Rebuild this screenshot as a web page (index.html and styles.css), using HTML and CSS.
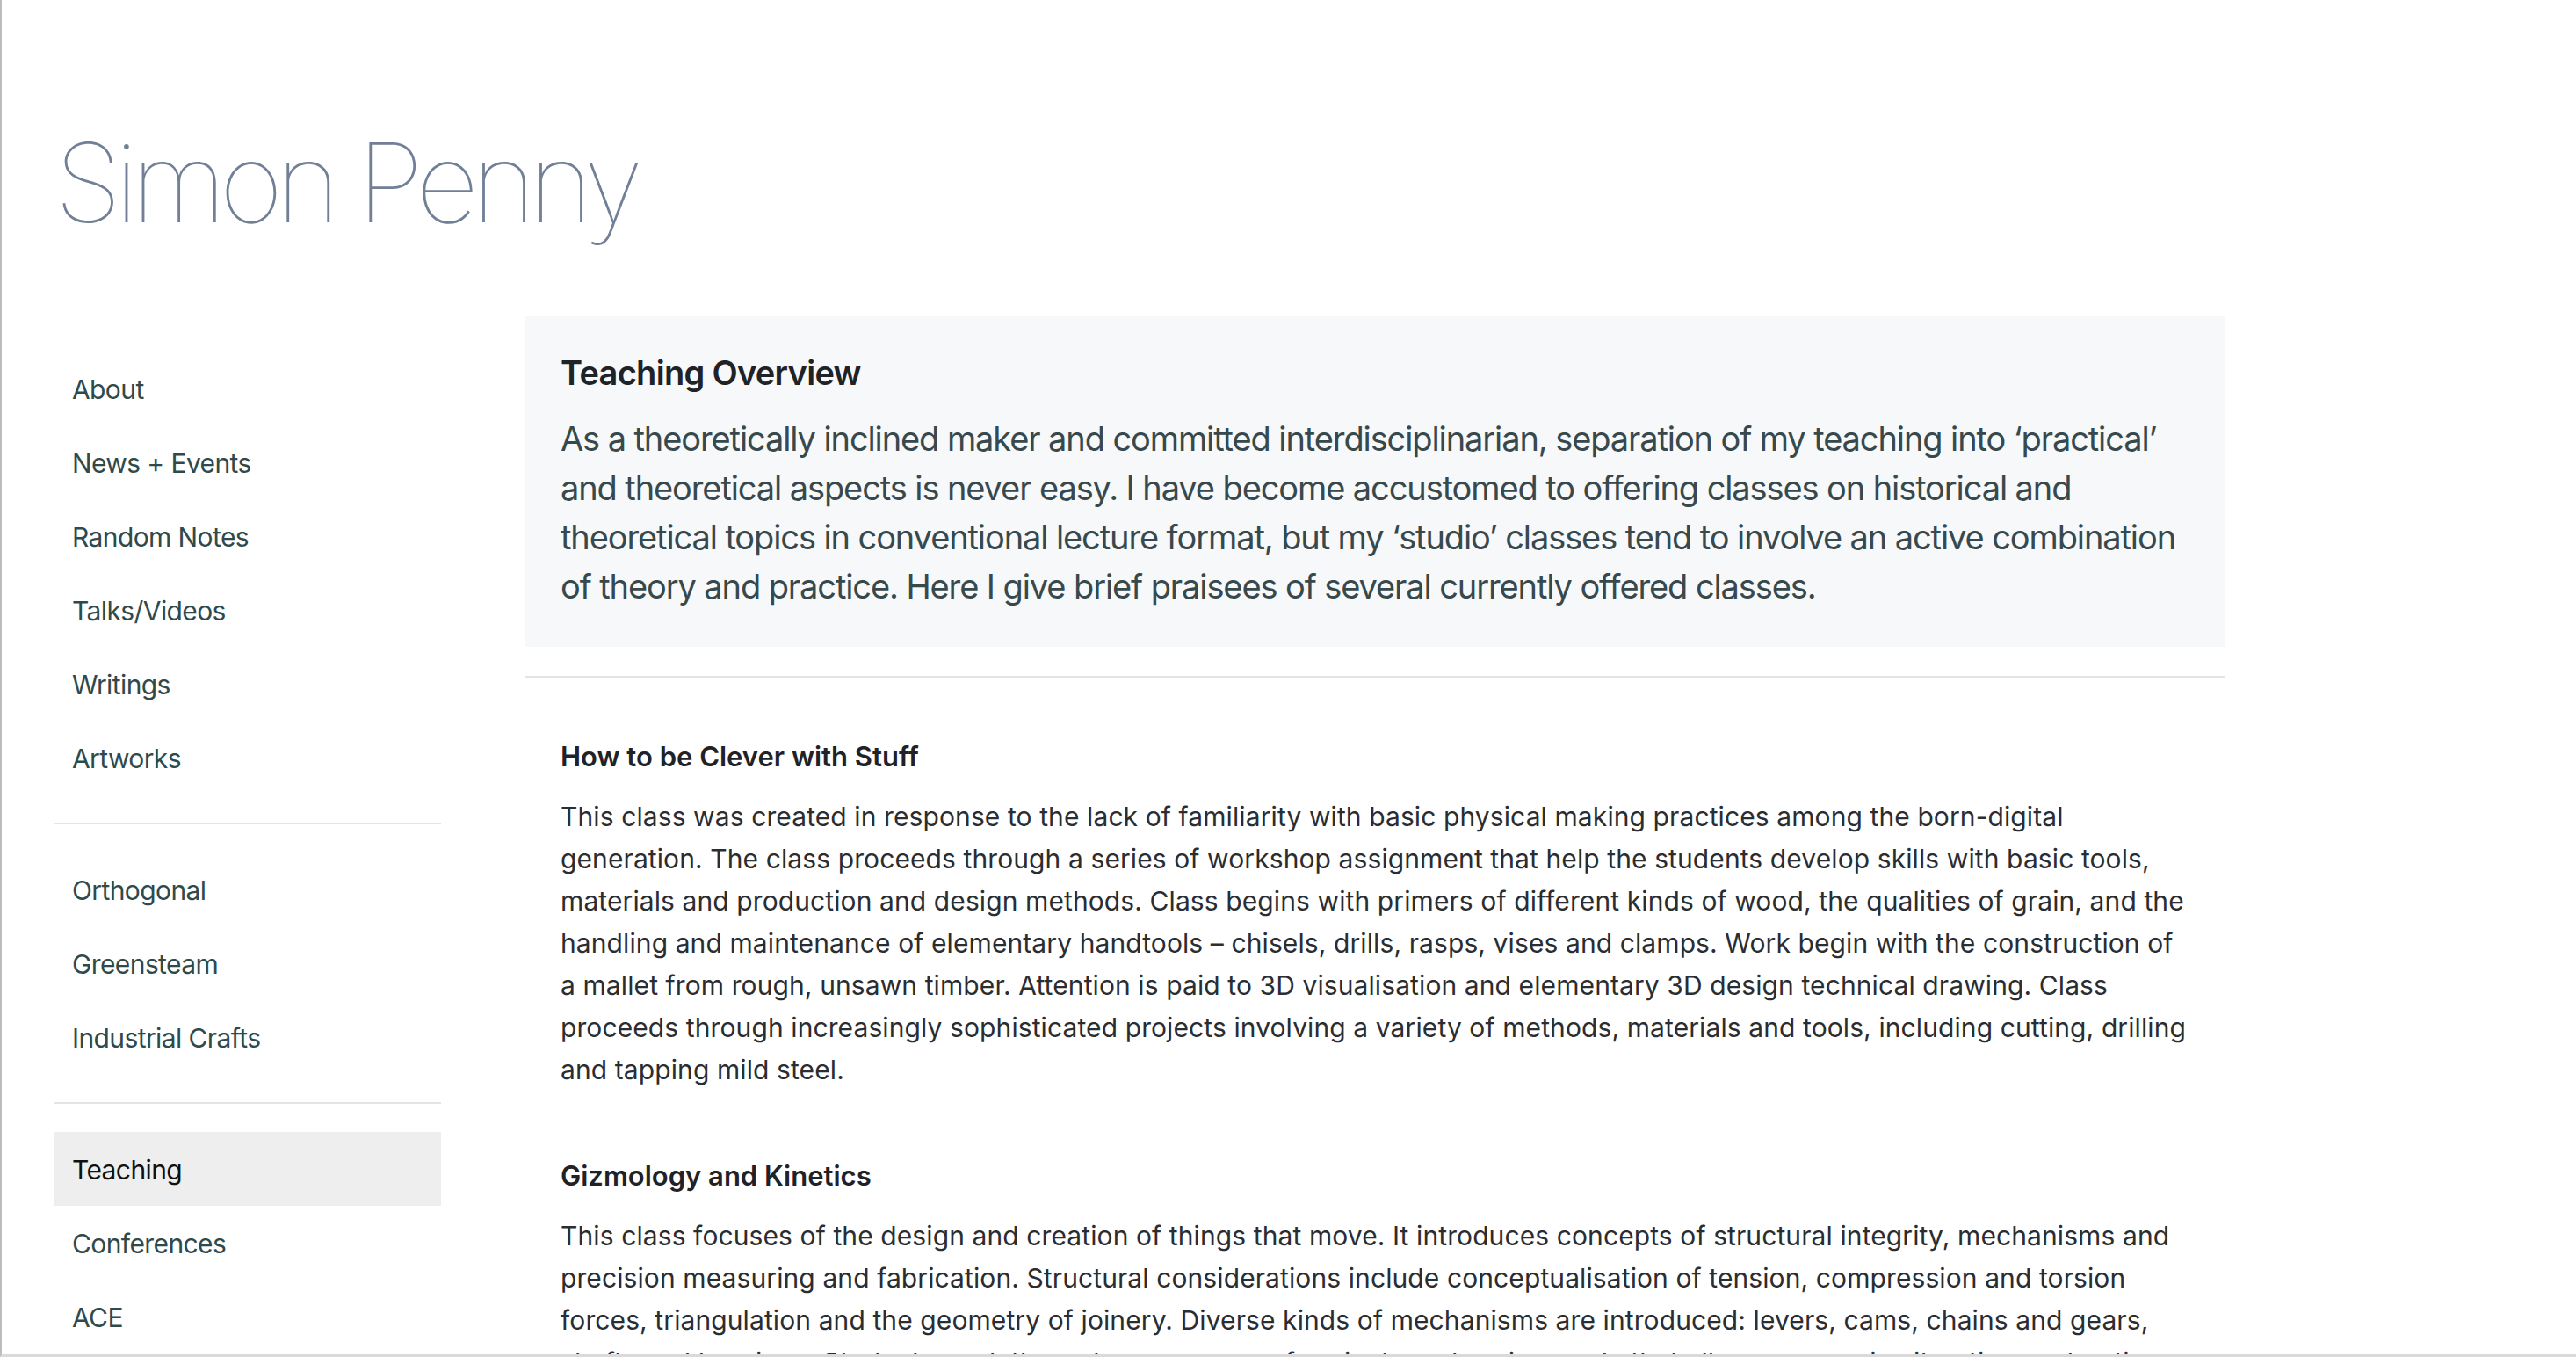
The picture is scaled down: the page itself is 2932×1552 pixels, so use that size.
FILE: index.html
```html
<!DOCTYPE html>
<html lang="en">
<head>
<meta charset="utf-8">
<title>Simon Penny – Teaching</title>
<link rel="stylesheet" href="styles.css">
</head>
<body>
<div class="window">
  <div class="page">
    <header class="site-header">
      <h1 class="site-title">Simon Penny</h1>
    </header>
    <div class="layout">
      <nav class="sidebar">
        <ul class="nav-group">
          <li><a class="nav-link" href="#">About</a></li>
          <li><a class="nav-link" href="#">News + Events</a></li>
          <li><a class="nav-link" href="#">Random Notes</a></li>
          <li><a class="nav-link" href="#">Talks/Videos</a></li>
          <li><a class="nav-link" href="#">Writings</a></li>
          <li><a class="nav-link" href="#">Artworks</a></li>
        </ul>
        <hr class="nav-divider">
        <ul class="nav-group">
          <li><a class="nav-link" href="#">Orthogonal</a></li>
          <li><a class="nav-link" href="#">Greensteam</a></li>
          <li><a class="nav-link" href="#">Industrial Crafts</a></li>
        </ul>
        <hr class="nav-divider">
        <ul class="nav-group">
          <li><a class="nav-link is-active" href="#">Teaching</a></li>
          <li><a class="nav-link" href="#">Conferences</a></li>
          <li><a class="nav-link" href="#">ACE</a></li>
        </ul>
      </nav>
      <main class="content">
        <section class="overview">
          <h2 class="overview-title">Teaching Overview</h2>
          <p class="overview-text">As a theoretically inclined maker and committed interdisciplinarian, separation of my teaching into ‘practical’ and theoretical aspects is never easy. I have become accustomed to offering classes on historical and theoretical topics in conventional lecture format, but my ‘studio’ classes tend to involve an active combination of theory and practice. Here I give brief praisees of several currently offered classes.</p>
        </section>
        <hr class="content-divider">
        <div class="classes">
          <article class="class-item">
            <h3 class="class-title">How to be Clever with Stuff</h3>
            <p class="class-text">This class was created in response to the lack of familiarity with basic physical making practices among the born-digital generation. The class proceeds through a series of workshop assignment that help the students develop skills with basic tools, materials and production and design methods. Class begins with primers of different kinds of wood, the qualities of grain, and the handling and maintenance of elementary handtools – chisels, drills, rasps, vises and clamps. Work begin with the construction of a mallet from rough, unsawn timber. Attention is paid to 3D visualisation and elementary 3D design technical drawing. Class proceeds through increasingly sophisticated projects involving a variety of methods, materials and tools, including cutting, drilling and tapping mild steel.</p>
          </article>
          <article class="class-item">
            <h3 class="class-title">Gizmology and Kinetics</h3>
            <p class="class-text">This class focuses of the design and creation of things that move. It introduces concepts of structural integrity, mechanisms and precision measuring and fabrication. Structural considerations include conceptualisation of tension, compression and torsion forces, triangulation and the geometry of joinery. Diverse kinds of mechanisms are introduced: levers, cams, chains and gears, shafts and bearings. Students work through a sequence of projects and assignments that allow progressive iterative exploration. The class emphasises hands-on learning and the development of practical intuition for physical systems.</p>
          </article>
        </div>
      </main>
    </div>
  </div>
</div>
</body>
</html>
```
FILE: styles.css
```css
html, body {
  margin: 0;
  padding: 0;
  background: #ffffff;
}

body {
  font-family: Inter, "Noto Sans", "Liberation Sans", sans-serif;
}

.window {
  height: 1541px;
  overflow: hidden;
  border-left: 2px solid #bdbdbd;
  border-bottom: 3px solid #dadada;
  box-sizing: content-box;
}

.page {
  padding-left: 60px;
}

.site-header {
  padding-top: 133px;
  margin-bottom: 77px;
}

.site-title {
  margin: 0;
  font-family: Inter, "Liberation Sans", sans-serif;
  font-weight: 100;
  font-size: 125px;
  line-height: 150px;
  color: #718096;
  letter-spacing: -8px;
}

.layout {
  display: grid;
  grid-template-columns: 440px 1935px;
  column-gap: 96px;
  align-items: start;
}

.sidebar {
  padding-top: 40px;
}

.nav-group {
  list-style: none;
  margin: 0;
  padding: 0;
}

.nav-link {
  display: block;
  padding: 19px 20px 17px;
  font-size: 30px;
  line-height: 48px;
  letter-spacing: -0.6px;
  color: #2f4a4b;
  text-decoration: none;
}

.nav-link.is-active {
  background: #eeeeee;
  color: #111111;
}

.nav-divider {
  margin: 32px 0;
  border: 0;
  border-top: 2px solid #e4e4e4;
  height: 0;
}

.content {
  min-width: 0;
}

.overview {
  background: #f7f8fa;
  padding: 36px 40px 41px;
}

.overview-title {
  margin: 0 0 19px;
  font-size: 38px;
  line-height: 56px;
  font-weight: 600;
  letter-spacing: -0.7px;
  color: #1f2226;
}

.overview-text {
  margin: 0;
  font-size: 38px;
  line-height: 56px;
  letter-spacing: -1.1px;
  color: #37494c;
}

.content-divider {
  margin: 33px 0 0;
  border: 0;
  border-top: 2px solid #e4e4e4;
  height: 0;
}

.classes {
  padding: 66px 40px 0;
}

.class-item + .class-item {
  margin-top: 73px;
}

.class-title {
  margin: 0 0 20px;
  font-size: 31px;
  line-height: 48px;
  font-weight: 600;
  color: #1f2226;
}

.class-text {
  margin: 0;
  font-size: 30px;
  line-height: 48px;
  letter-spacing: 0.1px;
  color: #2a2d31;
}
```
